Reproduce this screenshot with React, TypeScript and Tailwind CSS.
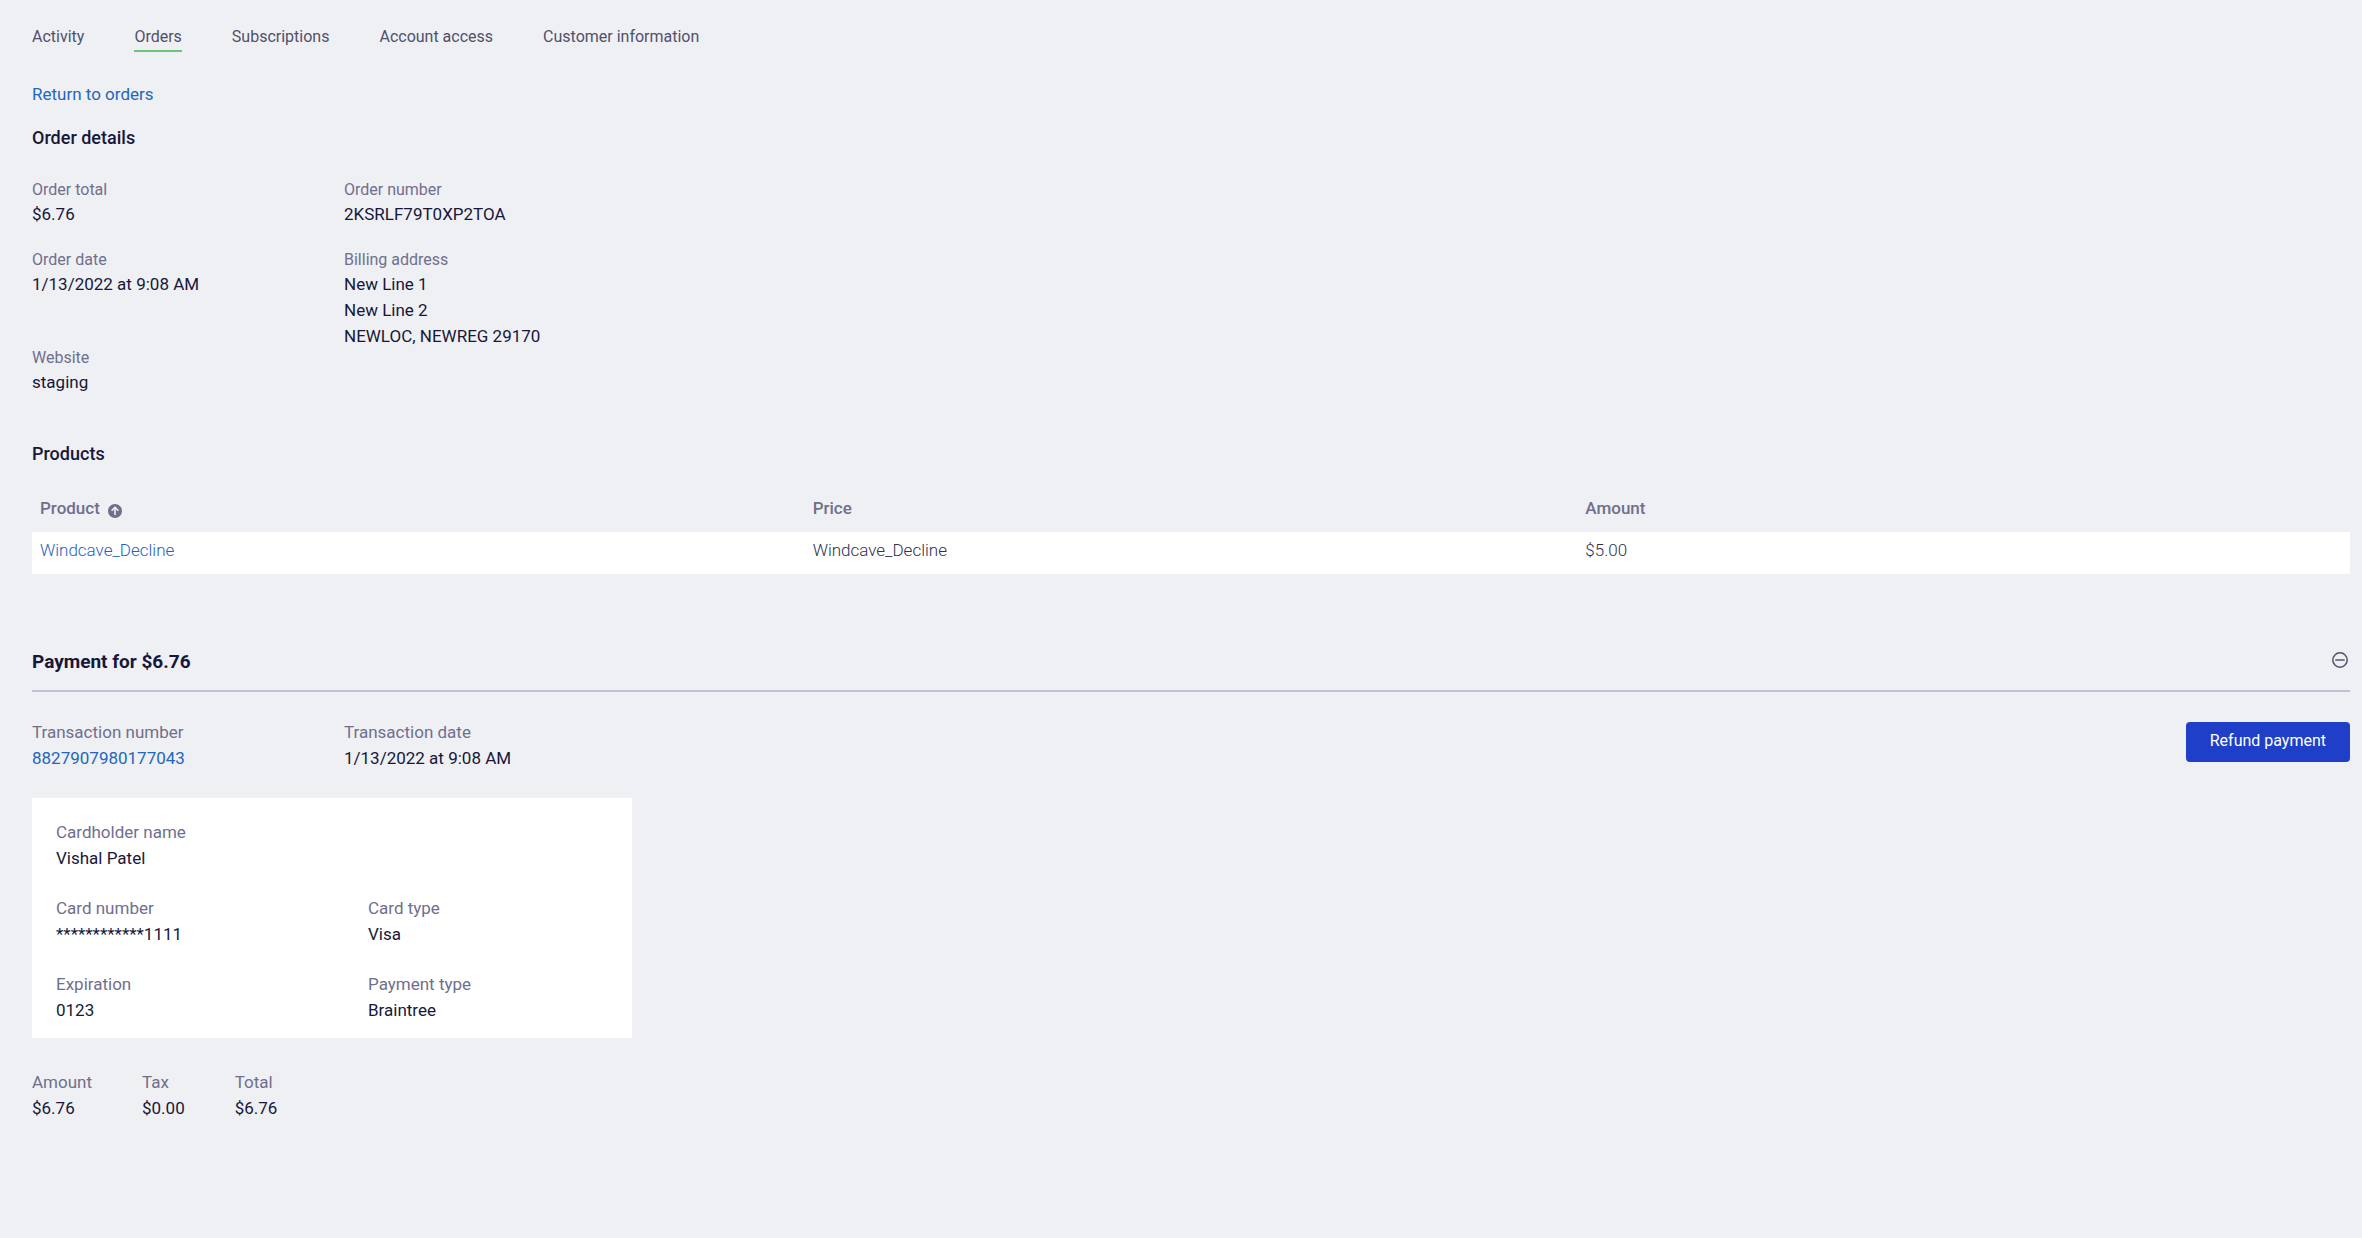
import React from "react";

type FieldProps = {
  label: string;
  children: React.ReactNode;
  compact?: boolean;
};

const tabs = ["Activity", "Orders", "Subscriptions", "Account access", "Customer information"];

function Field({ label, children, compact = false }: FieldProps) {
  return (
    <div>
      <dt className={compact ? "text-[16px] leading-[22px] text-[#6f6f8c]" : "text-[17px] leading-[26px] text-[#6f6f8c]"}>
        {label}
      </dt>
      <dd className="text-[17px] leading-[26px] text-[#17173a]">{children}</dd>
    </div>
  );
}

function SortAscendingIcon() {
  return (
    <svg viewBox="0 0 14 14" className="mt-1.5 size-3.5" aria-hidden="true">
      <circle cx="7" cy="7" r="7" fill="#6f6f8c" />
      <path d="M7 11V3.6M3.6 6.7L7 3.3l3.4 3.4" fill="none" stroke="#eff0f4" strokeWidth="1.6" />
    </svg>
  );
}

function CollapseIcon() {
  return (
    <svg viewBox="0 0 16 16" className="size-4" aria-hidden="true">
      <circle cx="8" cy="8" r="7.2" fill="none" stroke="#50506e" strokeWidth="1.5" />
      <path d="M3.3 8h9.4" stroke="#6f6f8c" strokeWidth="1.8" />
    </svg>
  );
}

export default function App() {
  return (
    <div className="min-h-screen bg-[#eff0f4] pt-6 pr-3 pb-8 pl-8 font-[Roboto,sans-serif] text-[#17173a]">
      <nav className="flex gap-[50px]">
        {tabs.map((tab) => (
          <a
            key={tab}
            href="#"
            aria-current={tab === "Orders" ? "page" : undefined}
            className={
              tab === "Orders"
                ? "border-b-2 border-[#6cc57c] text-[16px] leading-[26px] text-[#50506b]"
                : "border-b-2 border-transparent text-[16px] leading-[26px] text-[#50506b]"
            }
          >
            {tab}
          </a>
        ))}
      </nav>

      <main>
        <a href="#" className="mt-[30px] block w-fit text-[17px] leading-6 text-[#2366bb]">
          Return to orders
        </a>

        <section>
          <h2 className="mt-5 text-[18px] leading-6 font-medium">Order details</h2>
          <dl className="mt-[29px] grid grid-cols-[312px_1fr] grid-rows-[70px_98px_auto]">
            <Field compact label="Order total">$6.76</Field>
            <Field compact label="Order number">2KSRLF79T0XP2TOA</Field>
            <Field compact label="Order date">1/13/2022 at 9:08 AM</Field>
            <Field compact label="Billing address">
              New Line 1<br />
              New Line 2<br />
              NEWLOC, NEWREG 29170
            </Field>
            <Field compact label="Website">staging</Field>
          </dl>
        </section>

        <section>
          <h2 className="mt-[47px] text-[18px] leading-6 font-medium">Products</h2>
          <table className="mt-[18px] w-full table-fixed text-left text-[17px] leading-6">
            <thead>
              <tr className="h-12 text-[#6f6f8c]">
                <th className="px-2 font-medium" aria-sort="ascending">
                  <button type="button" className="flex items-center gap-2">
                    Product
                    <SortAscendingIcon />
                  </button>
                </th>
                <th className="px-2 font-medium">Price</th>
                <th className="px-2 font-medium">Amount</th>
              </tr>
            </thead>
            <tbody>
              <tr className="bg-white font-light text-[#2f2f50]">
                <td className="px-2 pt-1.5 pb-3">
                  <a href="#" className="text-[#1f62bb]">
                    Windcave_Decline
                  </a>
                </td>
                <td className="px-2 pt-1.5 pb-3">Windcave_Decline</td>
                <td className="px-2 pt-1.5 pb-3">$5.00</td>
              </tr>
            </tbody>
          </table>
        </section>

        <section>
          <div className="mt-[74px] flex items-center justify-between border-b-2 border-[#bdc2d6] pb-3.5">
            <h2 className="text-[19px] leading-7 font-bold">Payment for $6.76</h2>
            <button type="button" aria-label="Collapse payment" className="-mt-1 mr-0.5">
              <CollapseIcon />
            </button>
          </div>

          <div className="mt-[27px] flex items-start justify-between">
            <dl className="grid grid-cols-[312px_auto]">
              <Field label="Transaction number">
                <a href="#" className="text-[#2366bb]">
                  8827907980177043
                </a>
              </Field>
              <Field label="Transaction date">1/13/2022 at 9:08 AM</Field>
            </dl>
            <button type="button" className="mt-[3px] rounded bg-[#1f3fc9] px-6 pt-[7px] pb-[9px] text-[16px] leading-6 text-white">
              Refund payment
            </button>
          </div>

          <dl className="mt-[27px] grid w-full max-w-[600px] grid-cols-[312px_1fr] gap-y-6 bg-white px-6 pt-[21px] pb-[15px]">
            <div className="col-span-2">
              <Field label="Cardholder name">Vishal Patel</Field>
            </div>
            <Field label="Card number">************1111</Field>
            <Field label="Card type">Visa</Field>
            <Field label="Expiration">0123</Field>
            <Field label="Payment type">Braintree</Field>
          </dl>

          <dl className="mt-[31px] flex gap-[50px]">
            <Field label="Amount">$6.76</Field>
            <Field label="Tax">$0.00</Field>
            <Field label="Total">$6.76</Field>
          </dl>
        </section>
      </main>
    </div>
  );
}
